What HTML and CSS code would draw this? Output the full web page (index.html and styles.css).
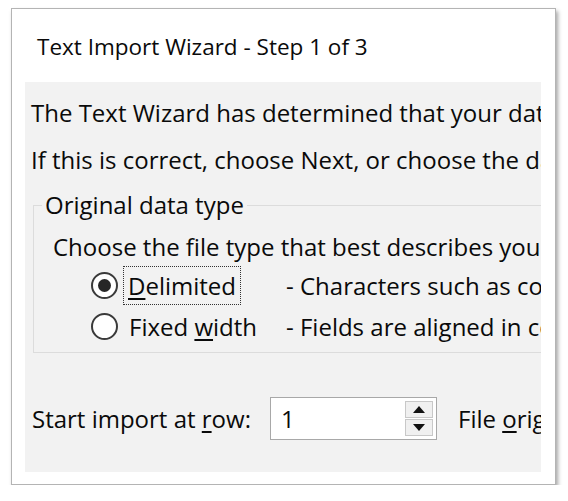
FILE: index.html
```html
<!DOCTYPE html>
<html>
<head>
<meta charset="utf-8">
<link rel="stylesheet" href="styles.css">
</head>
<body>
<div class="window">
  <div class="title">Text Import Wizard - Step 1 of 3</div>
  <div class="panel">
    <p class="line first">The Text Wizard has determined that your data is Delimited.</p>
    <p class="line second">If this is correct, choose Next, or choose the data type that best describes your data.</p>
    <fieldset class="group">
      <legend class="legend">Original data type</legend>
      <p class="line choose">Choose the file type that best describes your data:</p>
      <div class="option">
        <span class="radio checked"><span class="dot"></span></span>
        <span class="label"><span class="focus"><u>D</u>elimited</span></span>
        <span class="desc">- Characters such as commas or tabs separate each field.</span>
      </div>
      <div class="option">
        <span class="radio"></span>
        <span class="label">Fixed <u>w</u>idth</span>
        <span class="desc">- Fields are aligned in columns with spaces between each field.</span>
      </div>
    </fieldset>
    <div class="startrow">
      <span class="startlabel">Start import at <u>r</u>ow:</span>
      <div class="spin">
        <span class="spinvalue">1</span>
        <span class="spinbtns">
          <span class="spinbtn"><svg width="12" height="7" viewBox="0 0 12 7"><path d="M0 7 L6 0 L12 7 Z" fill="#111"/></svg></span>
          <span class="spinbtn"><svg width="12" height="7" viewBox="0 0 12 7"><path d="M0 0 L6 7 L12 0 Z" fill="#111"/></svg></span>
        </span>
      </div>
      <span class="origin">File <u>o</u>rigin:</span>
    </div>
  </div>
</div>
</body>
</html>
```
FILE: styles.css
```css
html, body {
  margin: 0;
  padding: 0;
  background: #ffffff;
}
body {
  font-family: "Segoe UI", "Open Sans", "Noto Sans", sans-serif;
  color: #0a0a0a;
}
.window {
  margin: 8px 0 0 11px;
  width: 543px;
  height: 475px;
  border: 1px solid #b4b4b4;
  background: #ffffff;
  box-shadow: 2px 3px 4px rgba(0, 0, 0, 0.35);
  display: flex;
  flex-direction: column;
}
.title {
  height: 73px;
  font-size: 22.5px;
  line-height: 76px;
  padding-left: 25px;
  white-space: nowrap;
}
.panel {
  margin: 0 14px 0 13px;
  height: 390px;
  background: #f2f2f2;
  overflow: hidden;
  padding-top: 16px;
  box-sizing: border-box;
}
.line {
  margin: 0;
  font-size: 24px;
  line-height: 30px;
  white-space: nowrap;
  padding-left: 6px;
}
.second {
  margin-top: 17px;
}
.group {
  margin: 15px 0 0 8px;
  padding: 0 0 5px 0;
  border: 1px solid #dcdcdc;
  width: 700px;
  min-width: 0;
}
.legend {
  margin-left: 8px;
  padding: 0 3px;
  font-size: 24px;
  line-height: 30px;
  white-space: nowrap;
}
.choose {
  margin-top: 12px;
  padding-left: 19px;
}
.option {
  display: flex;
  align-items: center;
  height: 41px;
  font-size: 24px;
  white-space: nowrap;
}
.option:first-of-type {
  margin-top: 3px;
}
.radio {
  margin-left: 57px;
  width: 23px;
  height: 23px;
  border: 2.5px solid #3a3a3a;
  border-radius: 50%;
  background: #fff;
  display: flex;
  align-items: center;
  justify-content: center;
  flex: none;
}
.dot {
  width: 13px;
  height: 13px;
  border-radius: 50%;
  background: #262626;
}
.label {
  display: block;
  width: 157px;
  margin-left: 11px;
  flex: none;
  line-height: 30px;
}
.focus {
  outline: 1px dotted #333;
  outline-offset: 0;
  padding: 2px 4px 2px 4px;
  margin-left: -5px;
}
.desc {
  flex: none;
}
u {
  text-decoration-thickness: 2px;
  text-underline-offset: 3px;
}
.startrow {
  margin-top: 44px;
  display: flex;
  align-items: center;
  height: 43px;
  font-size: 24px;
  white-space: nowrap;
  padding-left: 7px;
}
.startlabel {
  width: 238px;
  flex: none;
}
.spin {
  width: 165px;
  height: 41px;
  border: 1px solid #a8a8a8;
  background: #fff;
  display: flex;
  flex: none;
}
.spinvalue {
  flex: 1;
  padding-left: 10px;
  line-height: 41px;
}
.spinbtns {
  width: 31px;
  display: flex;
  flex-direction: column;
  padding: 3px 3px 3px 0;
  box-sizing: border-box;
  gap: 1px;
}
.spinbtn {
  flex: 1;
  display: flex;
  align-items: center;
  justify-content: center;
  background: #f0f0f0;
  border: 1px solid #c8c8c8;
}
.origin {
  margin-left: 21px;
}
```
